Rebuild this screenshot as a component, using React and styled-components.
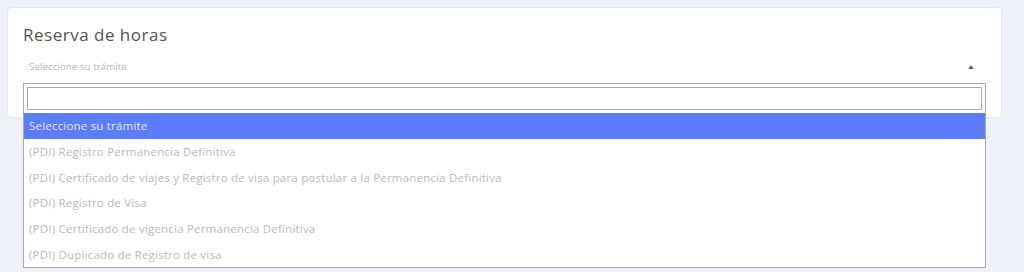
import { useState } from 'react';
import styled, { createGlobalStyle } from 'styled-components';

const GlobalStyle = createGlobalStyle`
  html, body {
    margin: 0;
    padding: 0;
    background: #eef2f8;
    font-family: "Open Sans", "Liberation Sans", sans-serif;
  }
`;

const Page = styled.div`
  height: 272px;
  padding: 7px 22px 0 7px;
  box-sizing: border-box;
  overflow: hidden;
`;

const Card = styled.div`
  background: #fff;
  border: 1px solid #e2e7ee;
  border-radius: 4px;
  padding: 16px 15px 0 15px;
  height: 111px;
  box-sizing: border-box;
`;

const Title = styled.h4`
  margin: 0;
  font-size: 17px;
  font-weight: 400;
  letter-spacing: 0.5px;
  color: #505458;
  line-height: 22px;
`;

const SelectWrap = styled.div`
  position: relative;
  margin-top: 11px;
`;

const SelectBox = styled.div`
  display: flex;
  align-items: center;
  justify-content: space-between;
  height: 26px;
  padding: 0 12px 7px 6px;
  box-sizing: border-box;
  font-size: 9.6px;
  letter-spacing: 0.12px;
  color: #b4b4b4;
`;

const Arrow = styled.span`
  width: 0;
  height: 0;
  border-left: 3px solid transparent;
  border-right: 3px solid transparent;
  border-bottom: 4px solid #666;
`;

const Dropdown = styled.div`
  position: absolute;
  top: 26px;
  left: 0;
  right: 0;
  background: #fff;
  border: 1px solid #aaa;
  box-sizing: border-box;
  z-index: 2;
`;

const SearchArea = styled.div`
  padding: 3px 3px 3px 3px;
`;

const SearchInput = styled.input`
  display: block;
  width: 100%;
  height: 23px;
  box-sizing: border-box;
  border: 1px solid #aaa;
  outline: none;
  padding: 2px 4px;
  font-family: inherit;
`;

const Option = styled.div`
  height: 25.67px;
  display: flex;
  align-items: center;
  padding: 0 5px;
  font-size: 11.5px;
  letter-spacing: 0.2px;
  color: ${(p) => (p.$active ? '#e3e9ff' : '#b9b9b9')};
  background: ${(p) => (p.$active ? '#5b7cfb' : 'transparent')};
  white-space: nowrap;
`;

const tramites = [
  'Seleccione su trámite',
  '(PDI) Registro Permanencia Definitiva',
  '(PDI) Certificado de viajes y Registro de visa para postular a la Permanencia Definitiva',
  '(PDI) Registro de Visa',
  '(PDI) Certificado de vigencia Permanencia Definitiva',
  '(PDI) Duplicado de Registro de visa',
];

export default function App() {
  const [query, setQuery] = useState('');
  const [active, setActive] = useState(0);

  return (
    <>
      <GlobalStyle />
      <Page>
        <Card>
          <Title>Reserva de horas</Title>
          <SelectWrap>
            <SelectBox>
              <span>Seleccione su trámite</span>
              <Arrow />
            </SelectBox>
            <Dropdown>
              <SearchArea>
                <SearchInput value={query} onChange={(e) => setQuery(e.target.value)} />
              </SearchArea>
              {tramites.map((t, i) => (
                <Option key={t} $active={i === active} onMouseEnter={() => setActive(i)}>
                  {t}
                </Option>
              ))}
            </Dropdown>
          </SelectWrap>
        </Card>
      </Page>
    </>
  );
}
